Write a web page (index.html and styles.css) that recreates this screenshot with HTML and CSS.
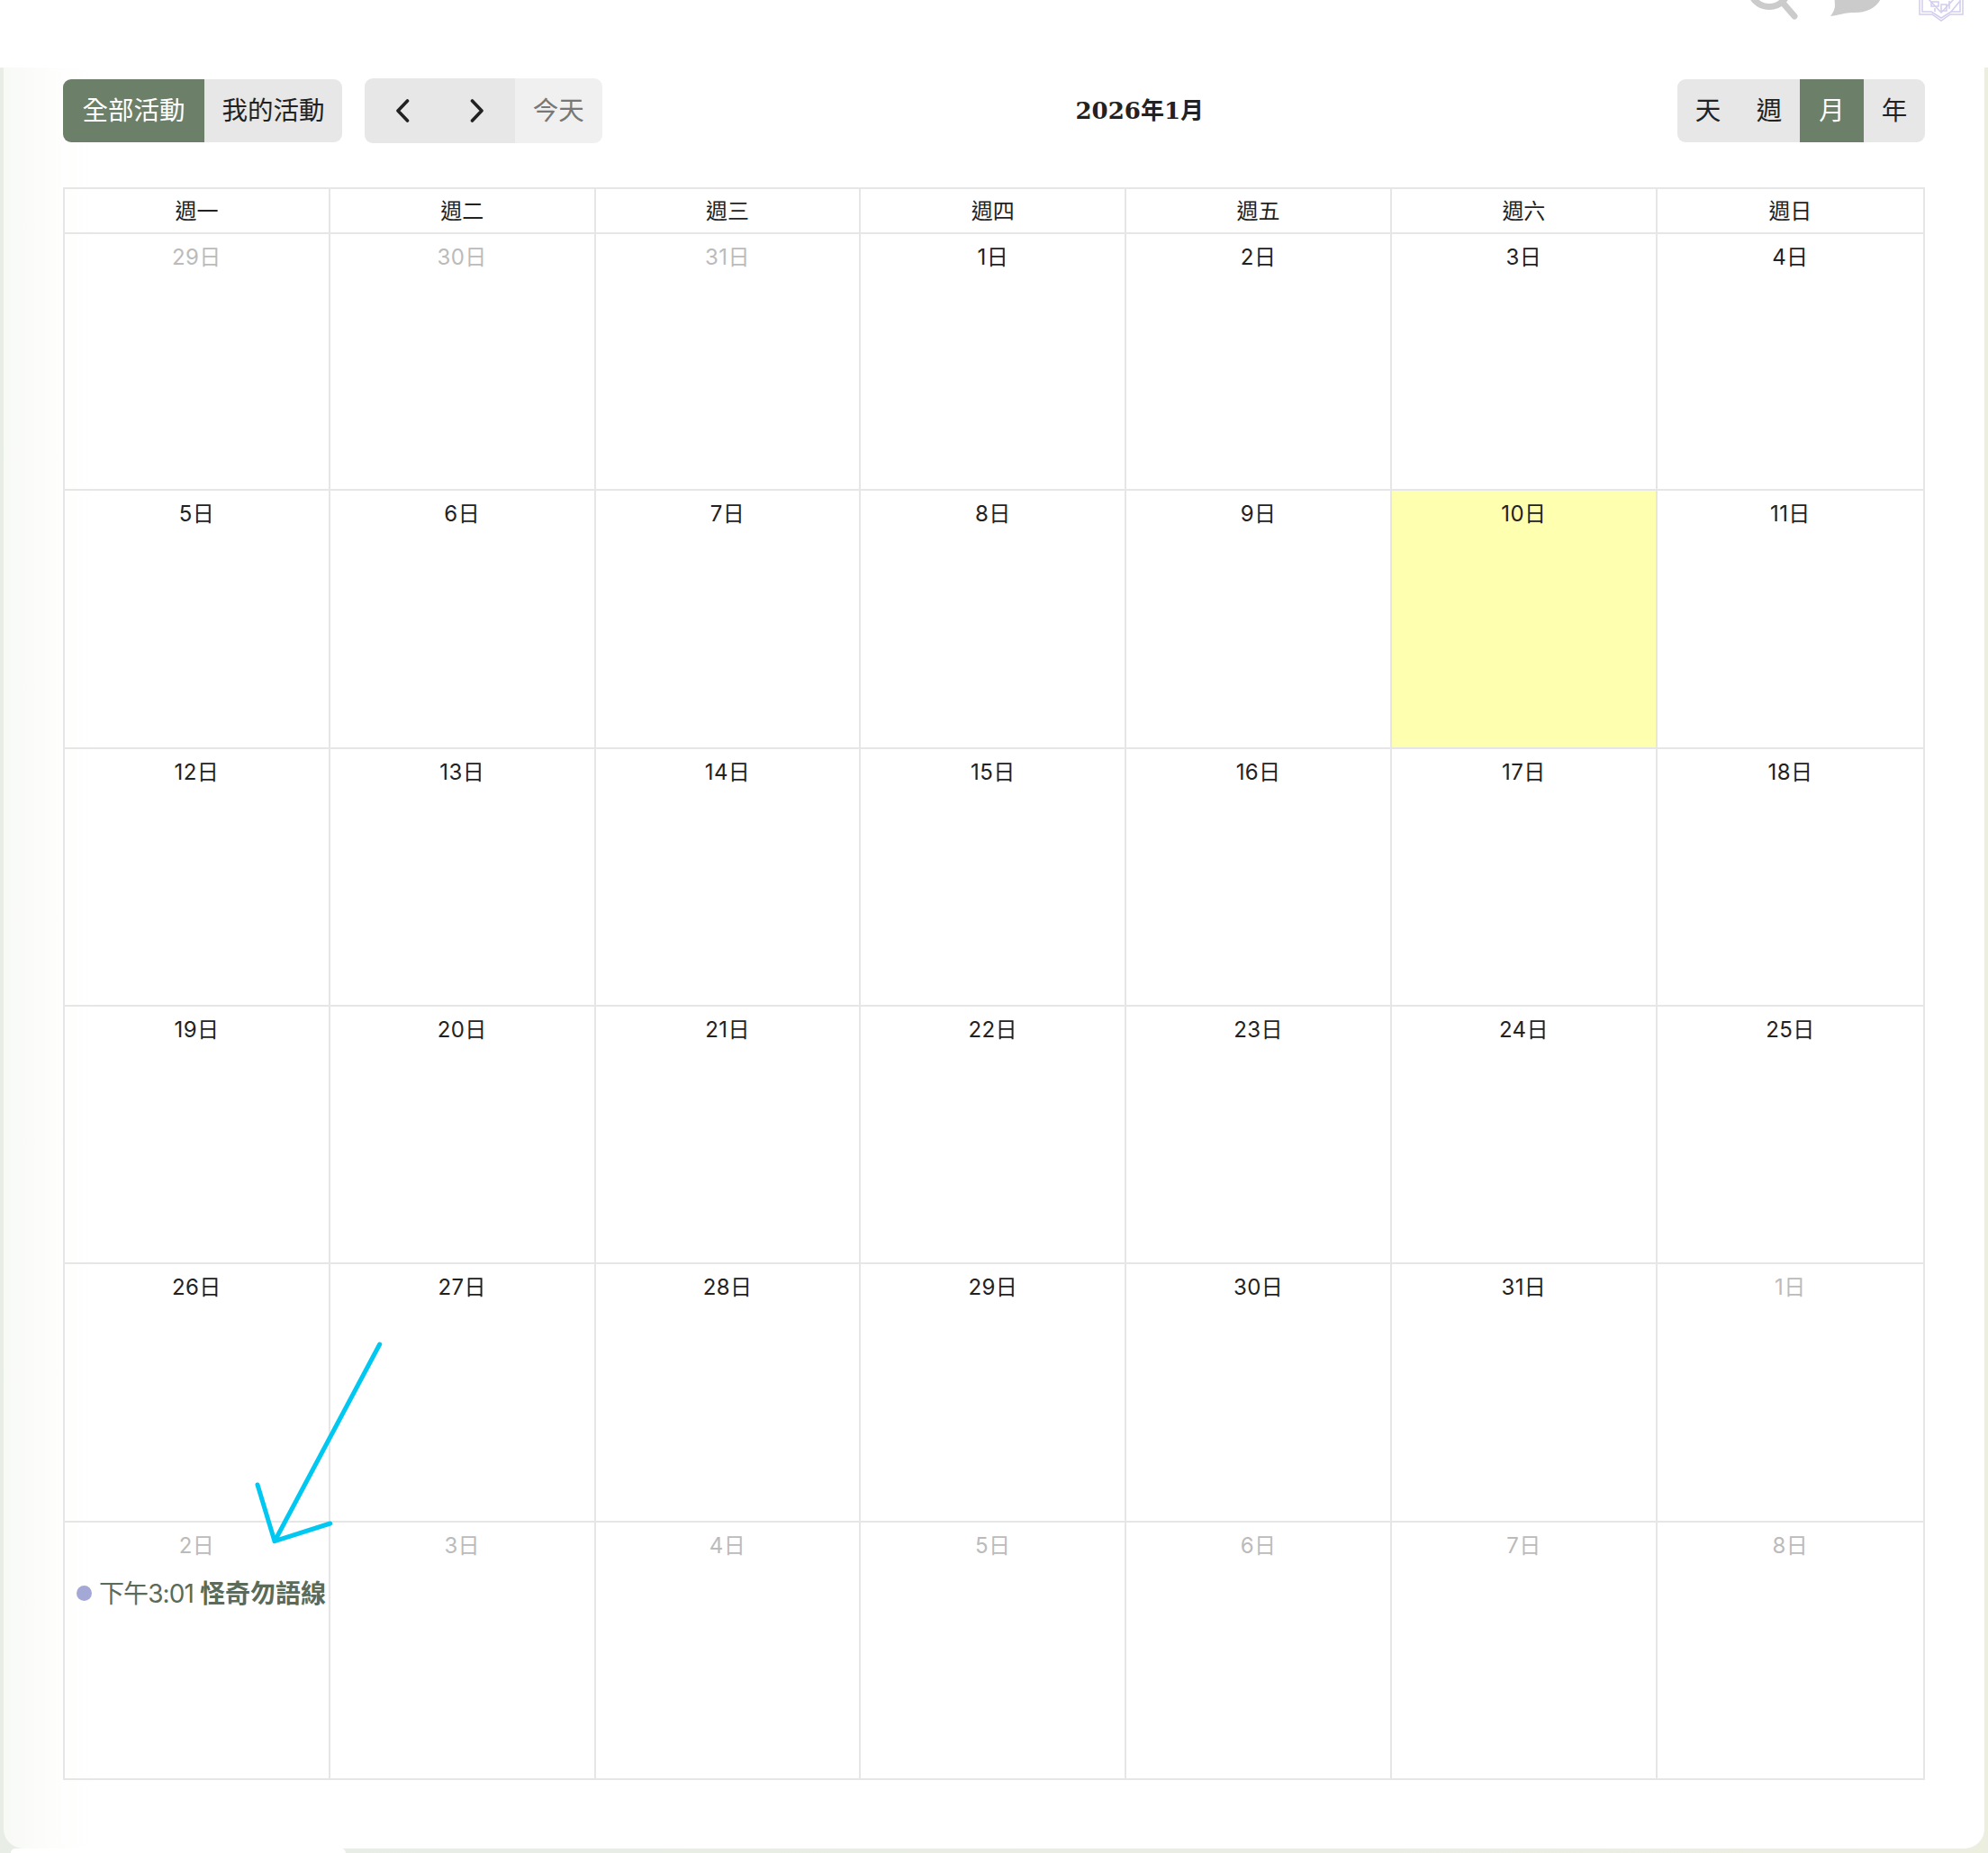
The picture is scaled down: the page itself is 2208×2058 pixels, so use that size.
FILE: index.html
```html
<!DOCTYPE html>
<html lang="zh-Hant">
<head>
<meta charset="utf-8">
<title>行事曆</title>
<link rel="stylesheet" href="styles.css">
</head>
<body>
<header class="topbar">
  <svg class="top-icon search" width="56" height="24" viewBox="0 0 56 24"><circle cx="24" cy="-14" r="21.5" fill="none" stroke="#cbcbcb" stroke-width="7"/><path d="M39 3 L52 18" fill="none" stroke="#cbcbcb" stroke-width="7" stroke-linecap="round"/></svg>
  <svg class="top-icon chat" width="58" height="24" viewBox="0 0 58 24"><path d="M0 18 C3 14 5 10 5 6 L4 -10 L58 -10 C57 6 42 15 24 14 C16 14 9 17 0 18 Z" fill="#cbcbcb"/></svg>
  <svg class="top-icon crest" width="50" height="24" viewBox="0 0 50 24"><g fill="none" stroke="#d2cdee" stroke-width="1.5"><path d="M1 -2 V16 H15 L25 23 L35 16 H49 V-2"/><path d="M4 -2 V13 H14 L25 20 L36 13 H46 V-2"/><path d="M36 13 L46 1 M10 -2 L25 14 L40 -2"/><path d="M14 2 h8 v5 h-8 z M25 5 h6 v7 h-6 z M18 9 v4 M34 1 v9"/></g></svg>
</header>

<main class="card">
  <div class="toolbar">
    <div class="toolbar-left">
      <div class="group">
        <button class="btn btn-active btn-all">全部活動</button>
        <button class="btn btn-mine">我的活動</button>
      </div>
      <div class="group group-nav">
        <button class="btn btn-arrow" aria-label="上一頁"><svg width="16" height="26" viewBox="0 0 16 26"><path d="M13.5 2 L3 13 L13.5 24" fill="none" stroke="#222" stroke-width="3.6" stroke-linecap="round" stroke-linejoin="round"/></svg></button>
        <button class="btn btn-arrow" aria-label="下一頁"><svg width="16" height="26" viewBox="0 0 16 26"><path d="M2.5 2 L13 13 L2.5 24" fill="none" stroke="#222" stroke-width="3.6" stroke-linecap="round" stroke-linejoin="round"/></svg></button>
        <button class="btn btn-today">今天</button>
      </div>
    </div>
    <h1 class="title">2026年1月</h1>
    <div class="group">
      <button class="btn btn-view">天</button>
      <button class="btn btn-view">週</button>
      <button class="btn btn-view btn-view-wide btn-active">月</button>
      <button class="btn btn-view">年</button>
    </div>
  </div>

  <div class="calendar">
    <div class="head">週一</div><div class="head">週二</div><div class="head">週三</div><div class="head">週四</div><div class="head">週五</div><div class="head">週六</div><div class="head">週日</div>

    <div class="day muted">29日</div><div class="day muted">30日</div><div class="day muted">31日</div><div class="day">1日</div><div class="day">2日</div><div class="day">3日</div><div class="day">4日</div>

    <div class="day">5日</div><div class="day">6日</div><div class="day">7日</div><div class="day">8日</div><div class="day">9日</div><div class="day today">10日</div><div class="day">11日</div>

    <div class="day">12日</div><div class="day">13日</div><div class="day">14日</div><div class="day">15日</div><div class="day">16日</div><div class="day">17日</div><div class="day">18日</div>

    <div class="day">19日</div><div class="day">20日</div><div class="day">21日</div><div class="day">22日</div><div class="day">23日</div><div class="day">24日</div><div class="day">25日</div>

    <div class="day">26日</div><div class="day">27日</div><div class="day">28日</div><div class="day">29日</div><div class="day">30日</div><div class="day">31日</div><div class="day muted">1日</div>

    <div class="day muted">2日
      <div class="event"><span class="dot"></span><span class="event-time">下午3:01</span><b class="event-name">怪奇勿語線</b></div>
    </div>
    <div class="day muted">3日</div><div class="day muted">4日</div><div class="day muted">5日</div><div class="day muted">6日</div><div class="day muted">7日</div><div class="day muted">8日</div>
  </div>
</main>
<div class="stub"></div>

<svg class="arrow" width="150" height="230" viewBox="0 0 150 230"><path d="M141.7 5 L25 223.7 M6 161 L25 223.7 L86.7 204" fill="none" stroke="#00c8f0" stroke-width="5" stroke-linecap="round" stroke-linejoin="round"/></svg>
</body>
</html>
```

FILE: styles.css
```css
* { box-sizing: border-box; }

html, body { margin: 0; padding: 0; }

body {
  position: relative;
  width: 2208px;
  height: 2058px;
  overflow: hidden;
  background: linear-gradient(90deg, #e8eee6 0%, #e9ede4 60%, #eceee0 100%);
  font-family: Inter, "Noto Sans CJK TC", sans-serif;
  color: #222;
}

.topbar {
  height: 75px;
  background: #fff;
  display: flex;
  justify-content: flex-end;
  align-items: flex-start;
  padding-right: 27px;
}

.top-icon { display: block; }
.search { margin-right: 36px; }
.chat { margin-right: 40px; }

.card {
  height: 1978px;
  margin: 0 4px;
  padding: 0 66px;
  background: linear-gradient(90deg, #f8faf6 0, #fdfdfc 50px, #fff 100px);
  border-radius: 0 0 22px 22px;
}

.stub {
  width: 372px;
  height: 5px;
  margin-left: 12px;
  background: #fff;
  border-radius: 8px 8px 0 0;
}

.toolbar {
  height: 96px;
  margin-bottom: 37px;
  display: flex;
  justify-content: space-between;
  align-items: center;
}

.toolbar-left {
  display: flex;
  align-items: center;
  gap: 25px;
}

.group {
  display: flex;
  height: 70px;
  border-radius: 9px;
  overflow: hidden;
}

.group-nav { height: 72px; }

.btn {
  border: 0;
  padding: 0;
  height: 100%;
  background: #e7e7e7;
  color: #222;
  font: 400 28.5px/1 Inter, "Noto Sans CJK TC", sans-serif;
  display: flex;
  align-items: center;
  justify-content: center;
}

.btn-active { background: #6c8069; color: #fff; }
.btn-all { width: 157px; }
.btn-mine { width: 153px; }
.btn-arrow { width: 83.5px; }
.btn-today { width: 96.5px; background: #f0f0f0; color: #777; }
.btn-view { width: 68px; }
.btn-view-wide { width: 71px; }

.title {
  margin: 2px 0 0;
  font: 700 26px/1.2 "DejaVu Serif", "Noto Sans CJK TC", serif;
  color: #222;
}

.calendar {
  display: grid;
  grid-template-columns: repeat(6, 294.8px) 297.2px;
  grid-template-rows: 50px 285.33px repeat(5, 286.33px);
  width: 2068px;
  border-top: 2px solid #e6e6e6;
  border-left: 2px solid #e6e6e6;
}

.head, .day {
  border-right: 2px solid #e6e6e6;
  border-bottom: 2px solid #e6e6e6;
  text-align: center;
  font-size: 24px;
  letter-spacing: 0.4px;
  color: #222;
}

.head { line-height: 50px; letter-spacing: 0; }

.day { padding-top: 8px; line-height: 36px; }
.muted { color: #bbb; }
.today { background: #ffffb0; }

.event {
  display: flex;
  align-items: center;
  margin-top: 17px;
  padding-left: 13px;
  line-height: 36px;
  font-size: 28px;
  letter-spacing: 0;
  color: #5b6b5a;
  white-space: nowrap;
}

.dot {
  width: 17px;
  height: 17px;
  margin-right: 8px;
  border-radius: 50%;
  background: #a4a8d6;
}

.event-time { margin-right: 7px; letter-spacing: -0.9px; }
.event-name { font-weight: 700; }

.arrow {
  position: absolute;
  left: 280px;
  top: 1488px;
}
```
